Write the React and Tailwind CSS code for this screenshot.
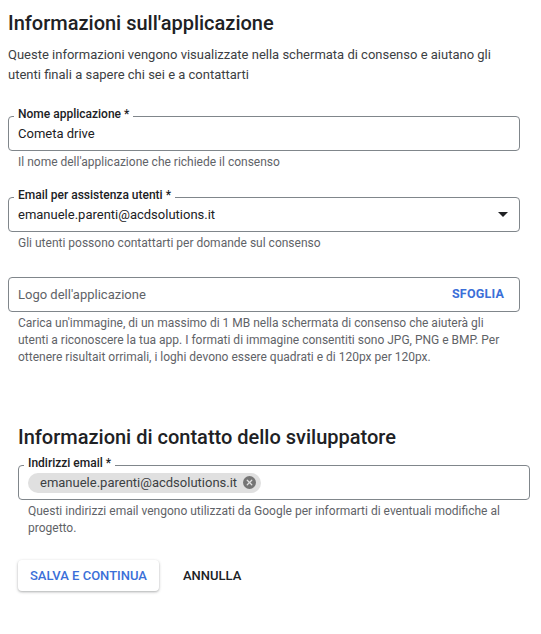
import { X } from 'lucide-react';

const BLUE = 'text-[#3b6fd8]';

function OutlinedField({ label, children, className = '' }) {
  return (
    <div className={`relative h-[35px] rounded-[4px] border border-[#80868b] flex items-center pl-[9px] ${className}`}>
      {label && (
        <span className="absolute left-[5px] top-[-9px] bg-white px-1 text-[12px] leading-[12px] font-medium text-[#202124]">
          {label}
        </span>
      )}
      {children}
    </div>
  );
}

function Hint({ children, className = '' }) {
  return (
    <p className={`px-[10px] text-[12px] leading-[17px] text-[#5f6368] ${className}`}>{children}</p>
  );
}

export default function App() {
  return (
    <div className="w-[541px] min-h-[634px] bg-white font-['Roboto',sans-serif] text-[#202124] pl-2 pr-[21px] pt-[11px]">
      <h1 className="text-[20px] leading-[24px] font-medium">Informazioni sull'applicazione</h1>
      <p className="mt-[10px] text-[13px] leading-[20px] text-[#3c4043]">
        Queste informazioni vengono visualizzate nella schermata di consenso e aiutano gli utenti finali a sapere chi sei e a contattarti
      </p>

      <OutlinedField label="Nome applicazione *" className="mt-[31px] pr-[14px]">
        <span className="text-[13px]">Cometa drive</span>
      </OutlinedField>
      <Hint className="mt-[3px]">Il nome dell'applicazione che richiede il consenso</Hint>

      <OutlinedField label="Email per assistenza utenti *" className="mt-[26px] pr-[11px]">
        <span className="flex-1 text-[13px]">emanuele.parenti@acdsolutions.it</span>
        <svg width="10" height="5" viewBox="0 0 10 5">
          <path d="M0 0h10L5 5z" fill="#202124" />
        </svg>
      </OutlinedField>
      <Hint className="mt-[3px]">Gli utenti possono contattarti per domande sul consenso</Hint>

      <OutlinedField className="mt-[25px] pr-[15px]">
        <span className="flex-1 text-[13px] text-[#5f6368]">Logo dell'applicazione</span>
        <button className={`text-[12.5px] font-bold tracking-[0.2px] ${BLUE}`}>SFOGLIA</button>
      </OutlinedField>
      <Hint className="mt-[3px]">
        Carica un'immagine, di un massimo di 1 MB nella schermata di consenso che aiuterà gli utenti a riconoscere la tua app. I formati di immagine consentiti sono JPG, PNG e BMP. Per ottenere risultait orrimali, i loghi devono essere quadrati e di 120px per 120px.
      </Hint>

      <div className="ml-[10px] mr-[-10px]">
        <h2 className="mt-[59px] text-[20px] leading-[24px] font-medium">Informazioni di contatto dello sviluppatore</h2>

        <OutlinedField label="Indirizzi email *" className="mt-[16px] pl-2">
          <span className="flex items-center gap-[6px] h-[20px] rounded-full bg-[#e0e0e0] pl-3 pr-[5px] text-[13px] text-[#3c4043]">
            emanuele.parenti@acdsolutions.it
            <span className="flex items-center justify-center w-[13px] h-[13px] rounded-full bg-[#757575]">
              <X size={9} strokeWidth={3.5} color="#e0e0e0" />
            </span>
          </span>
        </OutlinedField>
        <Hint className="mt-[3px]">
          Questi indirizzi email vengono utilizzati da Google per informarti di eventuali modifiche al progetto.
        </Hint>

        <div className="mt-[23px] flex items-center gap-3">
          <button className={`h-[31px] px-3 rounded-[4px] bg-white shadow-[0_1px_3px_rgba(60,64,67,0.3),0_1px_2px_rgba(60,64,67,0.15)] text-[13px] font-medium ${BLUE}`}>
            SALVA E CONTINUA
          </button>
          <button className="h-[31px] px-3 text-[13px] font-medium text-[#202124]">ANNULLA</button>
        </div>
      </div>
    </div>
  );
}
